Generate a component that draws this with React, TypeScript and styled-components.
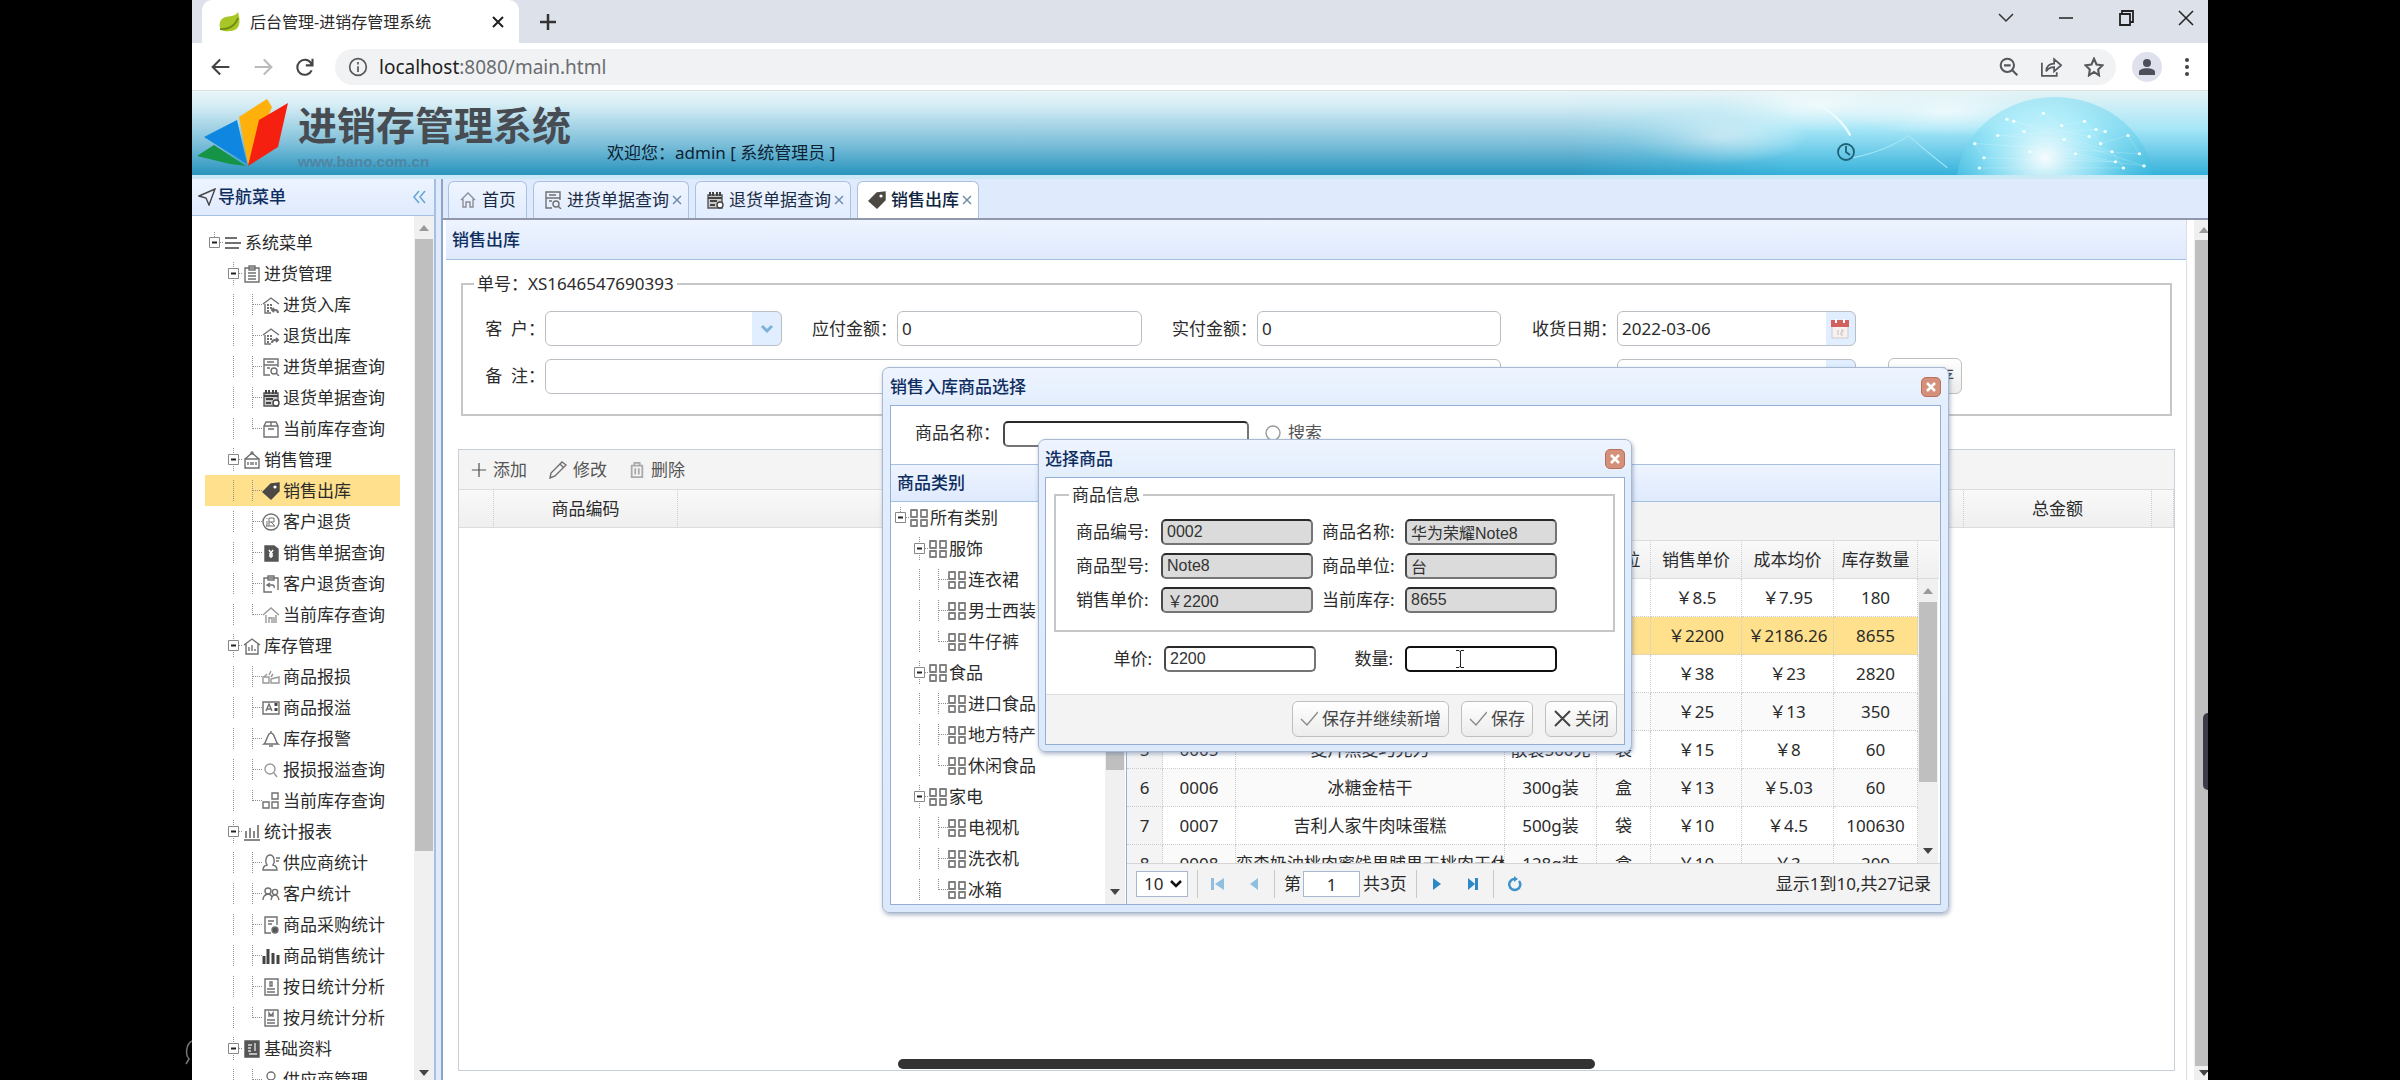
import React from "react";
import styled, { createGlobalStyle, css } from "styled-components";

const GlobalStyle = createGlobalStyle`
  *, *::before, *::after { box-sizing: border-box; }
  body {
    margin: 0;
    background: #000;
    color: #2b2b2b;
    font: 17px/24px "Noto Sans", "Noto Sans CJK SC", sans-serif;
  }
  button, input, select { font: inherit; color: inherit; margin: 0; }
  button { background: none; border: 0; padding: 0; cursor: pointer; }
  svg { display: block; flex: none; }
`;

/* ---------- icons ---------- */

const glyphs: Record<string, React.ReactNode> = {
  menu: <path d="M1 4h12M1 9h16M1 14h14" strokeWidth="2" />,
  clipboard: <><path d="M2 3h14v14H2z" /><path d="M6 1h6v4H6zM5 8h8M5 11h8M5 14h8" /></>,
  storeIn: <><path d="M1 8l8-6 8 6M3 8v9h6" /><path d="M5 9h2M8 9h2M5 12h2M8 12h2M5 15h2M12 12l-2 2 2 2M10 14h3q3 0 3 3" strokeWidth="2" /></>,
  storeOut: <><path d="M1 8l8-6 8 6M3 8v9h6" /><path d="M5 9h2M8 9h2M5 12h2M8 12h2M5 15h2M14 11l2 2-2 2M16 13h-3q-3 0-3 3" strokeWidth="2" /></>,
  docSearch: <><path d="M8 17H2V1h14v8M2 7h14M5 4h7M5 10h3" /><circle cx="12" cy="13" r="3" /><path d="M14 15l3 3" /></>,
  calendar: <><path d="M2 4h14v13H2z" fill="#c9c9c9" stroke="#555" /><path d="M4 1v4M7 1v4M11 1v4M14 1v4" stroke="#444" strokeWidth="2" /><path d="M2 7h14M4 10h7M4 14h5" stroke="#444" strokeWidth="2" /><circle cx="14" cy="14" r="3" fill="#fff" stroke="#444" /></>,
  box: <><path d="M2 6l2-4h10l2 4v11H2zM2 6h14M9 2v4M6 9h6" /></>,
  sale: <><path d="M2 8h14v9H2zM2 8l7-6 7 6" /><circle cx="9" cy="2" r="1" /><path d="M5 11v3M8 11v3M10 11v3M13 11v3" /></>,
  tag: <><path d="M9 2l8-1 0 8-8 8-8-7z" fill="#4c4844" stroke="#4c4844" /><circle cx="13" cy="5" r="1.6" fill="#fff" stroke="none" /></>,
  refund: <><circle cx="9" cy="9" r="8" /><path d="M7 5h5v4H7zM7 9v4M9 9l4 4M5 5v1M5 8v4l-1 1h9" strokeWidth="1" /></>,
  bill: <><path d="M3 2h9l4 3v12H3z" fill="#555" stroke="#555" /><path d="M7 6l2 3 2-3M9 9v5M7 10h4M7 12h4" stroke="#fff" /></>,
  clipBack: <><path d="M10 17H2V3h14v12" /><path d="M6 1h6v4H6zM8 8l-3 2 3 2M5 10h5q3 0 2 3" /></>,
  house: <path d="M1 9l8-7 8 7M4 9v8M14 9v8M7 17v-6M7 12h3v5M12 11v6" stroke="#999" />,
  warehouse: <path d="M1 8l8-6 8 6M3 7v10h12V7M6 14v-4M9 14V8M12 14v-2" />,
  broken: <path d="M1 9h6v6H1zM9 11l8-2v6H9zM2 9l3-3M7 7l2-4M9 9l2-3" stroke="#999" />,
  card: <><path d="M1 3h16v12H1z" /><path d="M4 12l3-7 3 7M5 10h4" /><path d="M14 4v10" strokeWidth="3" strokeDasharray="3 2" stroke="#444" /></>,
  alarm: <path d="M9 1v2M2 14c3-2 3-11 7-11s4 9 7 11zM7 16h4" />,
  search: <><circle cx="8" cy="8" r="5" stroke="#999" /><path d="M12 12l3 4" stroke="#999" /></>,
  blocks: <path d="M1 10h6v6H1zM10 10h6v6h-6zM10 1h6v6h-6z" />,
  chart: <path d="M1 17h16M3 15V8M7 15V5M11 15V8M15 15V2" strokeWidth="2" stroke="#888" />,
  user: <path d="M1 16q0-4 4-5-2-3-1-6 1-4 4-4t4 4q1 3-1 6 4 1 4 5zM14 4h4M14 7h3" />,
  users: <><circle cx="6" cy="6" r="3" /><circle cx="13" cy="7" r="2.6" /><path d="M1 15q0-5 5-6 3 0 4 3M9 15q1-5 4-5t4 5" /></>,
  docPie: <><path d="M9 17H3V1h12v8M6 5h6M6 8h4" /><circle cx="13" cy="14" r="3" fill="#555" /></>,
  bars: <path d="M2 17V9M6 17V2M11 17V6M16 17V8" strokeWidth="3" stroke="#444" />,
  dayDoc: <path d="M3 1h13v16H3zM5 11h8M5 14h8M8 4v4h2V4zM3 4v10" />,
  monthDoc: <path d="M3 1h13v16H3zM5 11h8M5 14h8M7 8V4l2 3 2-3v4M3 4v10" />,
  book: <><path d="M2 1h14v16H2z" fill="#555" stroke="#555" /><path d="M5 5h4M5 8h3M5 11h3M6 14h8M12 3v8" stroke="#ddd" /></>,
  supplier: <><circle cx="9" cy="5" r="4" /><path d="M1 17q0-6 6-7l2 3 2-3q6 1 6 7" /></>,
  grid: <path d="M1 1h6v7H1zM11 1h6v7h-6zM1 11h6v6H1zM11 11h6v6h-6z" stroke="#808080" strokeWidth="1.8" strokeLinejoin="round" />,
  home: <path d="M2 9l7-7 7 7M4 8v8h3v-5h4v5h3V8" stroke="#8d8d95" />,
  plus: <path d="M9 1v16M1 9h16" stroke="#555" />,
  pencil: <path d="M1 17l1-5L13 1l4 3L6 15zM11 3l4 4" />,
  trash: <path d="M2 4h14M6 4V1h6v3M3 4v13h12V4M7 7v7M11 7v7" stroke="#aaa" strokeWidth="2" />,
  check: <path d="M1 9l6 6L18 2" stroke="#888" />,
  cross: <path d="M2 1l15 15M17 1L2 16" stroke="#444" strokeWidth="2" />,
  circle: <circle cx="9" cy="9" r="7" stroke="#999" />,
  send: <path d="M1 8L17 1l-6 16-3-7z" stroke="#444" />,
  smallX: <path d="M5 5l8 8M13 5l-8 8" stroke="#6c87a8" />,
};

const Glyph = ({ name, size = 18 }: { name: string; size?: number }) => (
  <svg width={size} height={size} viewBox="0 0 18 18" fill="none" stroke="#707070" strokeWidth="1.4" aria-hidden="true">
    {glyphs[name]}
  </svg>
);

/* ---------- browser frame ---------- */

const Stage = styled.div`
  position: relative;
  height: 100vh;
  padding: 0 192px;
  background: #000;
  overflow: hidden;
`;
const Browser = styled.div`
  position: relative;
  display: flex;
  flex-direction: column;
  height: 100%;
  background: #fff;
  overflow: hidden;
`;
const TabStrip = styled.div`
  display: flex;
  height: 43px;
  padding-left: 10px;
  background: #dde1e9;
`;
const BrowserTab = styled.div`
  display: flex;
  align-items: center;
  gap: 9px;
  width: 317px;
  padding: 0 12px 0 15px;
  border-radius: 10px 10px 0 0;
  background: #fff;
  font-size: 16px;
  > span { flex: 1; white-space: nowrap; }
`;
const NewTab = styled.button`
  padding: 0 20px;
`;
const WindowControls = styled.div`
  display: flex;
  align-items: center;
  gap: 40px;
  margin-left: auto;
  padding: 0 12px 8px 0;
`;
const AddressRow = styled.div`
  display: flex;
  align-items: center;
  height: 48px;
  padding: 0 12px 0 19px;
  border-bottom: 1px solid #dcdfe2;
`;
const NavButtons = styled.div`
  display: flex;
  gap: 22px;
  margin-right: 20px;
`;
const AddressBar = styled.div`
  display: flex;
  align-items: center;
  flex: 1;
  gap: 22px;
  height: 36px;
  padding: 0 12px 0 13px;
  border-radius: 18px;
  background: #f1f2f4;
`;
const Url = styled.span`
  flex: 1;
  margin-left: -11px;
  font-size: 19px;
  color: #6a6d70;
  b { font-weight: 400; color: #222; }
`;
const Avatar = styled.span`
  display: grid;
  place-items: center;
  width: 30px;
  height: 30px;
  margin: 0 16px;
  border-radius: 50%;
  background: #dfe1ec;
`;

/* ---------- banner ---------- */

const Banner = styled.header`
  position: relative;
  display: flex;
  flex: none;
  height: 88px;
  padding-left: 4px;
  border-bottom: 4px solid #c9e9f7;
  background: linear-gradient(#e9f5f9 0, #d3ecf4 18%, #7fc0da 62%, #2e97c0 97%);
`;
const BannerArt = styled.svg`
  position: absolute;
  right: 0;
  top: 0;
`;
const Logo = styled.svg`
  position: relative;
`;
const ClockIcon = styled.svg`
  position: absolute;
  right: 352px;
  top: 51px;
`;
const Brand = styled.div`
  position: relative;
  padding: 9px 0 0 8px;
`;
const BrandName = styled.h1`
  margin: 0;
  font-size: 39px;
  line-height: 50px;
  font-weight: 700;
  color: #474c52;
`;
const BrandSite = styled.div`
  font: 700 15px/24px "Liberation Sans", sans-serif;
  color: #4f86a3;
`;
const Welcome = styled.div`
  position: relative;
  margin: 50px 0 0 36px;
  color: #0c2233;
`;

/* ---------- shared parts ---------- */

const Bar = styled.div`
  display: flex;
  flex-direction: column;
  align-items: center;
  flex: none;
  width: 20px;
  background: #f0f0f0;
`;
const ArrowBox = styled.button<{ $h: number; $down?: boolean }>`
  display: grid;
  place-items: center;
  flex: none;
  width: 100%;
  height: ${(p) => p.$h}px;
  &::after {
    content: "";
    border: 5px solid transparent;
    ${(p) => (p.$down ? "border-top: 6px solid #444; border-bottom: 0;" : "border-bottom: 6px solid #999; border-top: 0;")}
  }
`;
const Track = styled.div`
  flex: 1;
  width: 18px;
`;
const Thumb = styled.div<{ $size: number }>`
  height: ${(p) => p.$size}%;
  background: #bfbfbf;
`;
const Scrollbar = ({ up = 23, down = 24, size }: { up?: number; down?: number; size: number }) => (
  <Bar>
    <ArrowBox $h={up} aria-label="向上滚动" />
    <Track><Thumb $size={size} /></Track>
    <ArrowBox $h={down} $down aria-label="向下滚动" />
  </Bar>
);

const PanelTitle = styled.div<{ $tall?: boolean }>`
  display: flex;
  align-items: center;
  gap: 2px;
  flex: none;
  height: ${(p) => (p.$tall ? 40 : 37)}px;
  padding: 0 8px 0 6px;
  border-bottom: 1px solid #a5c0e2;
  background: linear-gradient(#eef4ff, #dfeafd);
  font-weight: 500;
  color: #0e2d5f;
  > button { margin-left: auto; }
`;

const TreeList = styled.ul<{ $top: number; $left: number }>`
  flex: 1;
  min-width: 0;
  margin: 0;
  padding: ${(p) => p.$top}px 14px 0 ${(p) => p.$left}px;
  list-style: none;
  overflow: hidden;
`;
const TreeRow = styled.button<{ $active?: boolean; $gap: number }>`
  display: flex;
  align-items: center;
  width: 100%;
  height: 31px;
  text-align: left;
  white-space: nowrap;
  background: ${(p) => (p.$active ? "#ffe08c" : "none")};
  > span { margin-left: ${(p) => p.$gap}px; }
`;

type Node = { label: string; icon: string; level: number; last?: boolean; active?: boolean };

const Lines = ({ level, last }: { level: number; last?: boolean }) => (
  <svg width={19 * (level + 1)} height="31" fill="none" stroke="#909090" strokeDasharray="1 1" aria-hidden="true">
    {level === 2 ? (
      <>
        <path d="M28.5 5v21" />
        <path d={last ? "M47.5 5v11" : "M47.5 5v21"} />
        <path d="M48 15.5h9" />
      </>
    ) : (
      <g transform={`translate(${19 * level} 0)`}>
        <path d={level ? "M9.500 4v7M9.500 20v7M15 15.500h4" : "M9.500 5v6M15 15.500h4"} />
        <path d="M4.500 10.500h10v10h-10z" strokeDasharray="none" stroke="#888" />
        <path d="M7 15.500h5" strokeDasharray="none" stroke="#222" strokeWidth="2" />
      </g>
    )}
  </svg>
);

const Tree = ({ nodes, top, left, gap }: { nodes: Node[]; top: number; left: number; gap: number }) => (
  <TreeList $top={top} $left={left}>
    {nodes.map((n, i) => (
      <li key={i}>
        <TreeRow $active={n.active} $gap={gap}>
          <Lines level={n.level} last={n.last} />
          <Glyph name={n.icon} />
          <span>{n.label}</span>
        </TreeRow>
      </li>
    ))}
  </TreeList>
);

/* ---------- page layout ---------- */

const Workspace = styled.div`
  display: flex;
  flex: 1;
  min-height: 0;
  background: #dfebfd;
`;
const Sidebar = styled.nav`
  display: flex;
  flex-direction: column;
  width: 244px;
  border-right: 2px solid #a5c0e2;
  background: #fff;
`;
const SidebarBody = styled.div`
  display: flex;
  flex: 1;
  min-height: 0;
  overflow: hidden;
`;
const Main = styled.main`
  display: flex;
  flex-direction: column;
  flex: 1;
  min-width: 0;
  margin-left: 5px;
  border-left: 2px solid #8ea4c6;
`;
const Tabs = styled.div`
  display: flex;
  align-items: flex-end;
  gap: 6px;
  flex: none;
  height: 41px;
  padding-left: 5px;
  border-bottom: 2px solid #9298ac;
`;
const Tab = styled.button<{ $active?: boolean }>`
  display: flex;
  align-items: center;
  gap: 5px;
  height: 37px;
  padding: 0 10px;
  border: 1px solid #a9c1e2;
  border-bottom: 0;
  border-radius: 6px 6px 0 0;
  background: linear-gradient(#eff5ff, #e0ecff);
  color: #1c2b44;
  ${(p) => p.$active && css`
    background: #fff;
    color: #0e2440;
    font-weight: 500;
  `}
  > span + svg { margin: 0 -8px 0 -6px; }
`;
const Pane = styled.div`
  display: flex;
  flex: 1;
  min-height: 0;
  padding-left: 3px;
  background: #fff;
`;
const Panel = styled.section`
  display: flex;
  flex-direction: column;
  flex: 1;
  min-width: 0;
  margin-right: 7px;
  border-right: 1px solid #dadfe4;
`;
const PanelBody = styled.div`
  display: flex;
  flex-direction: column;
  flex: 1;
  padding: 12px 11px 9px 12px;
`;
const ScrollEdge = styled.div`
  display: flex;
  width: 14px;
  overflow: hidden;
`;

const Fieldset = styled.fieldset`
  min-width: 0;
  margin: 0 3px;
  padding: 15px 0 20px;
  border: 2px solid #c4c6c8;
`;
const Legend = styled.legend<{ $inset?: number }>`
  margin-left: ${(p) => p.$inset ?? 11}px;
  padding: 0 3px;
`;
const FormGrid = styled.div`
  display: grid;
  grid-template-columns: 82px 237px 115px 245px 115px 244px 116px 239px 74px;
  row-gap: 12px;
  align-items: center;
`;
const Label = styled.label`
  text-align: right;
  white-space: pre;
`;
const fieldBox = css`
  width: 100%;
  height: 35px;
  padding: 0 4px;
  border: 1px solid #b9bdc4;
  border-radius: 6px;
  background: #fff;
  outline: 0;
`;
const Field = styled.input`${fieldBox}`;
const WideField = styled.input`
  ${fieldBox}
  grid-column: 2 / 7;
`;
const Combo = styled.div`
  display: flex;
  align-items: center;
  height: 35px;
  border: 1px solid #b9bdc4;
  border-radius: 6px;
  overflow: hidden;
  background: linear-gradient(to left, #e0eeff 29px, #fff 29px);
  > svg { margin: 0 6px; }
  select, input {
    flex: 1;
    width: 0;
    height: 100%;
    padding: 0 4px;
    border: 0;
    outline: 0;
    background: none;
    appearance: none;
  }
`;
const Chevron = () => (
  <svg width="16" height="16" fill="none" stroke="#7fb2da" strokeWidth="3" aria-hidden="true"><path d="M3 5l5 5 5-5" /></svg>
);
const Button = styled.button`
  display: inline-flex;
  align-items: center;
  justify-content: center;
  gap: 4px;
  height: 36px;
  padding: 0 7px;
  border: 1px solid #bfbfbf;
  border-radius: 6px;
  background: linear-gradient(#fff, #ececec);
  color: #444;
`;
const SaveCell = styled.div`
  display: flex;
  grid-column: 9;
  margin: 0 -32px 0 32px;
  > button { width: 74px; justify-content: flex-end; }
`;

const DataPanel = styled.div`
  flex: 1;
  margin-top: 33px;
  border: 1px solid #c9cfd6;
`;
const Toolbar = styled.div`
  display: flex;
  align-items: center;
  gap: 22px;
  height: 39px;
  padding-left: 12px;
  background: #f4f4f4;
`;
const ToolButton = styled.button`
  display: flex;
  align-items: center;
  gap: 6px;
  color: #555;
`;
const Table = styled.table`
  width: 100%;
  border-spacing: 0;
  table-layout: fixed;
  text-align: center;
  th, td {
    padding: 0;
    border-right: 1px dotted #ccc;
    border-bottom: 1px dotted #ccc;
    font-weight: 400;
    white-space: nowrap;
    overflow: hidden;
  }
  th {
    height: 39px;
    border-top: 1px solid #dcdcdc;
    border-bottom: 1px solid #dcdcdc;
    background: linear-gradient(#f9f9f9, #efefef);
  }
`;
const GoodsRow = styled.tr<{ $selected?: boolean }>`
  background: ${(p) => (p.$selected ? "#ffe08c" : "#fff")};
  &:nth-child(even) { background: ${(p) => (p.$selected ? "#ffe08c" : "#fafafa")}; }
  td { height: 38px; }
  td:first-child { background: ${(p) => (p.$selected ? "#ffe08c" : "#f4f4f4")}; }
`;

/* ---------- windows ---------- */

const Window = styled.section<{ $x: number; $y: number; $w: number; $h: number; $pad: number }>`
  position: absolute;
  left: ${(p) => p.$x}px;
  top: ${(p) => p.$y}px;
  width: ${(p) => p.$w}px;
  height: ${(p) => p.$h}px;
  display: flex;
  flex-direction: column;
  padding: 0 ${(p) => p.$pad}px ${(p) => p.$pad}px;
  border: 1px solid #a8b8cf;
  border-radius: 7px;
  background: linear-gradient(#eff4ff, #e2eefd 38px, #dbe9fb);
  box-shadow: 1px 2px 4px rgba(90, 110, 150, 0.5);
`;
const WindowTitle = styled.div`
  display: flex;
  align-items: center;
  justify-content: space-between;
  flex: none;
  height: 37px;
  font-weight: 500;
  color: #0e2d5f;
`;
const CloseButton = styled.button`
  display: grid;
  place-items: center;
  width: 20px;
  height: 20px;
  border: 1px solid #b9705a;
  border-radius: 5px;
  background: #d4907a;
`;
const WindowBody = styled.div`
  display: flex;
  flex-direction: column;
  flex: 1;
  min-height: 0;
  border: 1px solid #94afd3;
  background: #fff;
`;
const SearchRow = styled.div`
  display: flex;
  flex: none;
  height: 59px;
  padding: 15px 0 0 24px;
  border-bottom: 1px solid #a9c1dd;
  > input { margin: 0 15px 0 3px; width: 246px; }
  > button { align-self: flex-start; }
`;
const PlainInput = styled.input<{ $locked?: boolean; $focus?: boolean }>`
  width: 152px;
  height: 26px;
  padding: 0 4px;
  border: 2px solid #757575;
  border-color: ${(p) => (p.$focus ? "#111" : "#2a2a2a #757575 #757575 #4a4a4a")};
  border-radius: 5px;
  background: ${(p) => (p.$locked ? "#dbdbdb" : "#fff")};
  color: #333;
  font: 16px "Liberation Sans", "Noto Sans CJK SC", sans-serif;
  outline: 0;
`;
const Split = styled.div`
  display: flex;
  flex: 1;
  min-height: 0;
`;
const Category = styled.div`
  display: flex;
  width: 236px;
  padding-right: 1px;
  border-right: 1px solid #94afd3;
`;
const Goods = styled.div`
  display: flex;
  flex-direction: column;
  flex: 1;
  min-width: 0;
`;
const GoodsTools = styled.div`
  flex: none;
  height: 38px;
  background: #f3f3f3;
`;
const GoodsView = styled.div`
  display: flex;
  flex: 1;
  min-height: 0;
  overflow: hidden;
`;
const TableClip = styled.div`
  flex: 1;
  min-width: 0;
  overflow: hidden;
`;
const ScrollColumn = styled.div`
  display: flex;
  flex-direction: column;
  width: 22px;
  padding-right: 1px;
  &::before {
    content: "";
    height: 39px;
    border-top: 1px solid #dcdcdc;
    border-bottom: 1px solid #dcdcdc;
    background: linear-gradient(#f9f9f9, #efefef);
  }
  > div { flex: 1; }
`;
const Pager = styled.div`
  display: flex;
  align-items: center;
  flex: none;
  height: 41px;
  padding: 0 9px;
  border-top: 1px solid #d5d5d5;
  background: #f3f3f3;
  i { width: 1px; height: 28px; margin: 0 2px; background: #c9c9c9; }
  > button { display: grid; place-items: center; width: 36px; }
`;
const PageSize = styled.div`
  position: relative;
  margin-right: 7px;
  select {
    width: 52px;
    height: 26px;
    padding: 0 0 0 7px;
    border: 1px solid #a9b7cc;
    background: #fff;
    appearance: none;
  }
  svg { position: absolute; right: 5px; top: 7px; pointer-events: none; }
`;
const PageNumber = styled.label`
  display: flex;
  align-items: center;
  margin: 0 7px;
`;
const PageInput = styled.input`
  width: 57px;
  height: 26px;
  padding: 0;
  && { margin: 0 3px 0 2px; }
  border: 1px solid #a9b7cc;
  text-align: center;
`;
const PageInfo = styled.span`
  margin-left: auto;
`;

const InfoFieldset = styled.fieldset`
  margin: 5px 9px 0 8px;
  padding: 12px 0 17px 20px;
  border: 2px solid #c4c6c8;
`;
const InfoGrid = styled.div`
  display: grid;
  grid-template-columns: 85px 161px 83px 152px;
  row-gap: 8px;
  align-items: center;
`;
const QuantityRow = styled.div`
  position: relative;
  display: grid;
  grid-template-columns: 110px 156px 85px 152px;
  align-items: center;
  padding: 14px 0 0 8px;
  label { padding-right: 12px; text-align: right; }
  svg { position: absolute; left: 409px; top: 16px; }
`;
const Footer = styled.div`
  display: flex;
  justify-content: flex-end;
  gap: 12px;
  height: 50px;
  margin-top: auto;
  padding: 6px 7px 0 0;
  border-top: 1px solid #ddd;
  background: #f3f3f3;
`;

const HomeIndicator = styled.div`
  position: absolute;
  left: 706px;
  bottom: 11px;
  width: 697px;
  height: 10px;
  border-radius: 5px;
  background: #333;
`;
const EdgeHandle = styled.div`
  position: absolute;
  right: 0;
  top: 713px;
  width: 5px;
  height: 77px;
  border-radius: 5px 0 0 5px;
  background: #3c3c46;
`;
const EdgeMark = styled.svg`
  position: absolute;
  left: 184px;
  top: 1038px;
`;

/* ---------- data ---------- */

const n = (level: number, icon: string, label: string, extra: Partial<Node> = {}): Node => ({ level, icon, label, ...extra });
const end = { last: true };

const menu: Node[] = [
  n(0, "menu", "系统菜单"),
  n(1, "clipboard", "进货管理"),
  n(2, "storeIn", "进货入库"),
  n(2, "storeOut", "退货出库"),
  n(2, "docSearch", "进货单据查询"),
  n(2, "calendar", "退货单据查询"),
  n(2, "box", "当前库存查询", end),
  n(1, "sale", "销售管理"),
  n(2, "tag", "销售出库", { active: true }),
  n(2, "refund", "客户退货"),
  n(2, "bill", "销售单据查询"),
  n(2, "clipBack", "客户退货查询"),
  n(2, "house", "当前库存查询", end),
  n(1, "warehouse", "库存管理"),
  n(2, "broken", "商品报损"),
  n(2, "card", "商品报溢"),
  n(2, "alarm", "库存报警"),
  n(2, "search", "报损报溢查询"),
  n(2, "blocks", "当前库存查询", end),
  n(1, "chart", "统计报表"),
  n(2, "user", "供应商统计"),
  n(2, "users", "客户统计"),
  n(2, "docPie", "商品采购统计"),
  n(2, "bars", "商品销售统计"),
  n(2, "dayDoc", "按日统计分析"),
  n(2, "monthDoc", "按月统计分析", end),
  n(1, "book", "基础资料"),
  n(2, "supplier", "供应商管理"),
];

const categories: Node[] = [
  n(0, "grid", "所有类别"),
  n(1, "grid", "服饰"),
  n(2, "grid", "连衣裙"),
  n(2, "grid", "男士西装"),
  n(2, "grid", "牛仔裤", end),
  n(1, "grid", "食品"),
  n(2, "grid", "进口食品"),
  n(2, "grid", "地方特产"),
  n(2, "grid", "休闲食品", end),
  n(1, "grid", "家电"),
  n(2, "grid", "电视机"),
  n(2, "grid", "洗衣机"),
  n(2, "grid", "冰箱", end),
];

const goods = [
  ["1", "0001", "", "", "", "￥8.5", "￥7.95", "180"],
  ["2", "0002", "华为荣耀Note8", "Note8", "台", "￥2200", "￥2186.26", "8655"],
  ["3", "0003", "", "", "", "￥38", "￥23", "2820"],
  ["4", "0004", "", "", "", "￥25", "￥13", "350"],
  ["5", "0005", "麦片燕麦巧克力", "散装500克", "袋", "￥15", "￥8", "60"],
  ["6", "0006", "冰糖金桔干", "300g装", "盒", "￥13", "￥5.03", "60"],
  ["7", "0007", "吉利人家牛肉味蛋糕", "500g装", "袋", "￥10", "￥4.5", "100630"],
  ["8", "0008", "奕森奶油桃肉蜜饯果脯果干桃肉干休", "128g装", "盒", "￥10", "￥3", "200"],
];
const goodsWidths = [36, 73, 0, 92, 54, 91, 92, 84];
const goodsHeads = ["", "商品编码", "商品名称", "商品型号", "单位", "销售单价", "成本均价", "库存数量"];

const info = [
  ["商品编号", "0002"], ["商品名称", "华为荣耀Note8"],
  ["商品型号", "Note8"], ["商品单位", "台"],
  ["销售单价", "￥2200"], ["当前库存", "8655"],
];

const sparks = [[344, 28], [359, 40], [376, 22], [392, 34], [412, 30], [426, 52], [450, 44], [460, 62], [316, 52], [324, 66], [439, 70], [404, 62], [364, 60], [464, 74], [394, 48], [336, 44], [422, 38], [430, 40], [416, 45], [350, 30], [436, 60], [446, 76], [320, 76]];

const toolIcon = { width: 24, height: 24, viewBox: "0 0 24 24", fill: "none", stroke: "#55585c", strokeWidth: 2 };

const CloseX = () => (
  <CloseButton aria-label="关闭窗口">
    <svg width="10" height="10" stroke="#fff" strokeWidth="2.500" aria-hidden="true"><path d="M1 1l8 8M9 1L1 9" /></svg>
  </CloseButton>
);

export default function App() {
  return (
    <Stage>
      <GlobalStyle />
      <EdgeMark width="8" height="28" fill="none" stroke="#777" strokeWidth="1.500" aria-hidden="true">
        <path d="M8 3C2 6 1 17 5 21L2 26" />
      </EdgeMark>
      <Browser>
        <TabStrip>
          <BrowserTab>
            <svg width="24" height="22" viewBox="0 0 24 22" aria-hidden="true">
              <path d="M21 1c3 10 2 19-8 19-12 2-12-8-8-12C9 4 18 7 21 1z" fill="#a8c626" />
              <path d="M3 18c8 1 15-3 18-11" stroke="#6f8d0e" strokeWidth="2" fill="none" />
            </svg>
            <span>后台管理-进销存管理系统</span>
            <button aria-label="关闭标签页"><svg width="18" height="18" stroke="#222" strokeWidth="2"><path d="M4 4l10 10M14 4L4 14" /></svg></button>
          </BrowserTab>
          <NewTab aria-label="新标签页"><svg width="18" height="18" stroke="#333" strokeWidth="2.500"><path d="M9 1v16M1 9h16" /></svg></NewTab>
          <WindowControls>
            <button aria-label="搜索标签页"><svg width="20" height="20" fill="none" stroke="#333" strokeWidth="1.500"><path d="M3 6l7 7 7-7" /></svg></button>
            <button aria-label="最小化"><svg width="20" height="20" stroke="#222" strokeWidth="1.500"><path d="M3 10h14" /></svg></button>
            <button aria-label="还原"><svg width="20" height="20" fill="none" stroke="#222" strokeWidth="1.800"><path d="M4 6h10v11H4zM6 6V3h11v11h-3" /></svg></button>
            <button aria-label="关闭"><svg width="20" height="20" stroke="#222" strokeWidth="1.500"><path d="M3 3l14 14M17 3L3 17" /></svg></button>
          </WindowControls>
        </TabStrip>
        <AddressRow>
          <NavButtons>
            <button aria-label="后退"><svg {...toolIcon} width="20" height="20" stroke="#444" strokeWidth="2.500"><path d="M22 12H3M11 3l-9 9 9 9" /></svg></button>
            <button aria-label="前进"><svg {...toolIcon} width="20" height="20" stroke="#bbb" strokeWidth="2.500"><path d="M2 12h19M13 3l9 9-9 9" /></svg></button>
            <button aria-label="刷新"><svg {...toolIcon} width="20" height="20" stroke="#444" strokeWidth="2.500"><path d="M20 16a9 9 0 1 1-1-9l2 3M21 2v8h-8" /></svg></button>
          </NavButtons>
          <AddressBar>
            <svg {...toolIcon} width="20" height="20"><circle cx="12" cy="12" r="10" /><path d="M12 11v7M12 6v3" /></svg>
            <Url><b>localhost</b>:8080/main.html</Url>
            <svg {...toolIcon} width="20" height="20" strokeWidth="2.500"><circle cx="10" cy="10" r="8" /><path d="M6 10h8M16 16l6 6" /></svg>
            <svg {...toolIcon} width="21" height="22"><path d="M1 7v15h17v-4M6 17c0-6 4-9 9-9V3l8 7-8 7v-5c-4 0-7 1-9 5z" /></svg>
            <svg {...toolIcon} width="20" height="20" strokeWidth="2.500"><path d="M12 2l3 7 7 1-5 5 1 7-6-4-6 4 1-7-5-5 7-1z" /></svg>
          </AddressBar>
          <Avatar><svg width="18" height="18" fill="#4d5058"><circle cx="9" cy="5" r="4" /><path d="M1 17v-3c0-5 16-5 16 0v3z" /></svg></Avatar>
          <button aria-label="菜单"><svg width="18" height="20" fill="#444"><circle cx="9" cy="3" r="2" /><circle cx="9" cy="10" r="2" /><circle cx="9" cy="17" r="2" /></svg></button>
        </AddressRow>

        <Banner>
          <BannerArt width="640" height="84" viewBox="-40 0 560 83" preserveAspectRatio="none" aria-hidden="true">
            <defs>
              <linearGradient id="sky" x1="0" y1="0" x2="0" y2="1">
                <stop offset="0" stopColor="#e6f3f5" /><stop offset="0.450" stopColor="#a6e6f7" /><stop offset="1" stopColor="#35b1da" />
              </linearGradient>
              <linearGradient id="fade"><stop offset="0" stopColor="#000" /><stop offset="0.350" stopColor="#fff" /></linearGradient>
              <mask id="left"><rect x="-40" width="560" height="83" fill="url(#fade)" /></mask>
              <radialGradient id="glow" cx="0.450" cy="0.350" r="0.550">
                <stop offset="0" stopColor="#fff" stopOpacity="0.950" /><stop offset="0.500" stopColor="#a5ecfb" stopOpacity="0.700" /><stop offset="1" stopColor="#3fbfe2" stopOpacity="0.350" />
              </radialGradient>
              <radialGradient id="cloud"><stop offset="0" stopColor="#fff" stopOpacity="0.700" /><stop offset="1" stopColor="#fff" stopOpacity="0" /></radialGradient>
            </defs>
            <g mask="url(#left)">
              <rect x="-40" width="560" height="83" fill="url(#sky)" />
              <ellipse cx="180" cy="14" rx="90" ry="26" fill="url(#cloud)" />
              <ellipse cx="90" cy="45" rx="80" ry="28" fill="url(#cloud)" />
              <ellipse cx="290" cy="20" rx="90" ry="24" fill="url(#cloud)" />
              <path d="M175 10q24 16 32 34" stroke="#e9fdff" strokeWidth="2" fill="none" />
              <path d="M210 66q30-8 48-22 14 14 34 32" stroke="#a5e8f8" fill="none" />
            </g>
            <ellipse cx="386" cy="92" rx="86" ry="86" fill="url(#glow)" />
            <polyline points={sparks.map((s) => s.join(",")).join(" ")} fill="none" stroke="#eaffff" strokeOpacity="0.300" strokeWidth="0.600" />
            {sparks.map(([x, y]) => <circle key={`${x}-${y}`} cx={x} cy={y} r="1.500" fill="#f2ffff" />)}
          </BannerArt>
          <Logo width="94" height="76" viewBox="0 0 94 76" role="img" aria-label="标志">
            <path d="M1 65l17-11 32 21-16-2z" fill="#159447" />
            <path d="M43 26L71 8l5 8-24 58z" fill="#ffb00a" />
            <path d="M8 46l33-17 10 44z" fill="#0f86e0" />
            <path d="M63 29L92 12 82 56 52 75z" fill="#f5200f" />
          </Logo>
          <Brand>
            <BrandName>进销存管理系统</BrandName>
            <BrandSite>www.bano.com.cn</BrandSite>
          </Brand>
          <Welcome>欢迎您：admin [ 系统管理员 ]</Welcome>
          <ClockIcon width="20" height="20" fill="none" stroke="#1f6076" strokeWidth="1.800" aria-hidden="true">
            <circle cx="10" cy="10" r="8" /><path d="M10 4v6l4 3" />
          </ClockIcon>
        </Banner>

        <Workspace>
          <Sidebar>
            <PanelTitle><Glyph name="send" />导航菜单
              <button aria-label="折叠菜单"><svg width="14" height="14" fill="none" stroke="#69a6d6" strokeWidth="1.600"><path d="M7 1L2 7l5 6M13 1L8 7l5 6" /></svg></button>
            </PanelTitle>
            <SidebarBody>
              <Tree nodes={menu} top={11} left={13} gap={3} />
              <Scrollbar down={14} size={74} />
            </SidebarBody>
          </Sidebar>
          <Main>
            <Tabs>
              <Tab><Glyph name="home" /><span>首页</span></Tab>
              <Tab><Glyph name="docSearch" /><span>进货单据查询</span><Glyph name="smallX" /></Tab>
              <Tab><Glyph name="calendar" /><span>退货单据查询</span><Glyph name="smallX" /></Tab>
              <Tab $active><Glyph name="tag" /><span>销售出库</span><Glyph name="smallX" /></Tab>
            </Tabs>
            <Pane>
              <Panel>
                <PanelTitle $tall>销售出库</PanelTitle>
                <PanelBody>
                  <Fieldset>
                    <Legend>单号：XS1646547690393</Legend>
                    <FormGrid>
                      <Label htmlFor="customer">客  户：</Label>
                      <Combo><select id="customer" defaultValue=""><option value="" /></select><Chevron /></Combo>
                      <Label htmlFor="due">应付金额：</Label>
                      <Field id="due" defaultValue="0" />
                      <Label htmlFor="paid">实付金额：</Label>
                      <Field id="paid" defaultValue="0" />
                      <Label htmlFor="date">收货日期：</Label>
                      <Combo>
                        <input id="date" defaultValue="2022-03-06" />
                        <svg width="18" height="20" aria-hidden="true"><path d="M1 2h16v17H1z" fill="#f6f2f2" stroke="#d5c8c8" /><path d="M0 1h18v7H0z" fill="#d3625f" /><path d="M5 0v4M13 0v4" stroke="#fff" strokeWidth="2" /><path d="M7 11v5M10 11h2v2h-2v3h2" stroke="#cbb" fill="none" /></svg>
                      </Combo>
                      <span />
                      <Label htmlFor="remark">备  注：</Label>
                      <WideField id="remark" />
                      <span />
                      <Combo><select aria-label="结算方式" defaultValue=""><option value="" /></select><Chevron /></Combo>
                      <SaveCell><Button>保存</Button></SaveCell>
                    </FormGrid>
                  </Fieldset>
                  <DataPanel>
                    <Toolbar>
                      <ToolButton><Glyph name="plus" size={16} />添加</ToolButton>
                      <ToolButton><Glyph name="pencil" />修改</ToolButton>
                      <ToolButton><Glyph name="trash" size={16} />删除</ToolButton>
                    </Toolbar>
                    <Table>
                      <colgroup><col width="35" /><col width="184" /><col /><col width="188" /><col width="22" /></colgroup>
                      <thead><tr><th /><th>商品编码</th><th /><th>总金额</th><th /></tr></thead>
                    </Table>
                  </DataPanel>
                </PanelBody>
              </Panel>
              <ScrollEdge><Scrollbar up={20} down={14} size={100} /></ScrollEdge>
            </Pane>
          </Main>
        </Workspace>

        <Window $x={690} $y={367} $w={1067} $h={546} $pad={7}>
          <WindowTitle>销售入库商品选择<CloseX /></WindowTitle>
          <WindowBody>
            <SearchRow>
              <label htmlFor="goodsName">商品名称：</label>
              <PlainInput id="goodsName" />
              <ToolButton><Glyph name="circle" />搜索</ToolButton>
            </SearchRow>
            <PanelTitle>商品类别</PanelTitle>
            <Split>
              <Category>
                <Tree nodes={categories} top={0} left={0} gap={2} />
                <Scrollbar size={69} />
              </Category>
              <Goods>
                <GoodsTools />
                <GoodsView>
                  <TableClip>
                    <Table>
                      <colgroup>{goodsWidths.map((w, i) => <col key={i} width={w || undefined} />)}</colgroup>
                      <thead><tr>{goodsHeads.map((h, i) => <th key={i}>{h}</th>)}</tr></thead>
                      <tbody>
                        {goods.map((row) => (
                          <GoodsRow key={row[0]} $selected={row[0] === "2"}>{row.map((c, i) => <td key={i}>{c}</td>)}</GoodsRow>
                        ))}
                      </tbody>
                    </Table>
                  </TableClip>
                  <ScrollColumn><Scrollbar size={76} /></ScrollColumn>
                </GoodsView>
                <Pager>
                  <PageSize>
                    <select aria-label="每页条数" defaultValue="10"><option>10</option></select>
                    <svg width="14" height="12" fill="none" stroke="#111" strokeWidth="2.500"><path d="M2 3l5 5 5-5" /></svg>
                  </PageSize>
                  <i />
                  <button aria-label="第一页"><svg width="16" height="14" fill="#8fbfe0"><path d="M1 1h3v12H1zM14 1v12L5 7z" /></svg></button>
                  <button aria-label="上一页"><svg width="16" height="14" fill="#8fbfe0"><path d="M12 1v12L4 7z" /></svg></button>
                  <i />
                  <PageNumber>第<PageInput defaultValue="1" />共3页</PageNumber>
                  <i />
                  <button aria-label="下一页"><svg width="16" height="14" fill="#2f88c6"><path d="M4 1v12l8-6z" /></svg></button>
                  <button aria-label="最后一页"><svg width="16" height="14" fill="#2f88c6"><path d="M3 1v12l7-6zM10 1h3v12h-3z" /></svg></button>
                  <i />
                  <button aria-label="刷新列表"><svg width="16" height="16" fill="none" stroke="#3c92cb" strokeWidth="2.500"><path d="M9 3a5.500 5.500 0 1 0 4 2" /><path d="M8 0l4 3-4 3z" fill="#3c92cb" stroke="none" /></svg></button>
                  <PageInfo>显示1到10,共27记录</PageInfo>
                </Pager>
              </Goods>
            </Split>
          </WindowBody>
        </Window>

        <Window $x={846} $y={439} $w={594} $h={313} $pad={6}>
          <WindowTitle>选择商品<CloseX /></WindowTitle>
          <WindowBody>
            <InfoFieldset>
              <Legend $inset={-7}>商品信息</Legend>
              <InfoGrid>
                {info.map(([label, value]) => (
                  <React.Fragment key={label}>
                    <label htmlFor={label}>{label}:</label>
                    <PlainInput id={label} $locked readOnly defaultValue={value} />
                  </React.Fragment>
                ))}
              </InfoGrid>
            </InfoFieldset>
            <QuantityRow>
              <label htmlFor="price">单价:</label>
              <PlainInput id="price" defaultValue="2200" />
              <label htmlFor="amount">数量:</label>
              <PlainInput id="amount" $focus />
              <svg width="10" height="22" fill="none" stroke="#222" aria-hidden="true"><path d="M1 2.500h3l1 1 1-1h3M1 19.500h3l1-1 1 1h3M5.500 3v16" /></svg>
            </QuantityRow>
            <Footer>
              <Button><Glyph name="check" />保存并继续新增</Button>
              <Button><Glyph name="check" />保存</Button>
              <Button><Glyph name="cross" />关闭</Button>
            </Footer>
          </WindowBody>
        </Window>

        <HomeIndicator />
        <EdgeHandle />
      </Browser>
    </Stage>
  );
}
